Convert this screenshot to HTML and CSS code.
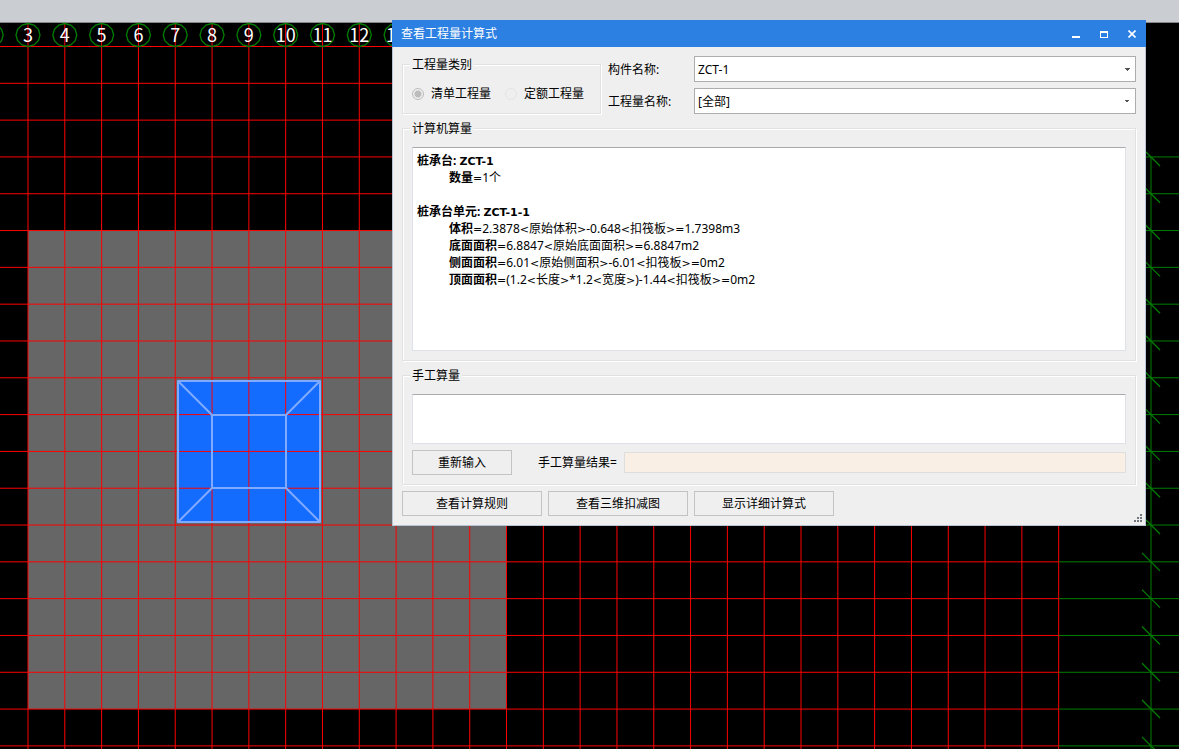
FILE: index.html
```html
<!DOCTYPE html>
<html lang="zh-CN">
<head>
<meta charset="utf-8">
<title>查看工程量计算式</title>
<link rel="stylesheet" href="styles.css">
</head>
<body>
<div class="toolbar"></div>
<main class="workspace">
  <svg class="drawing" aria-hidden="true">
    <rect class="slab" x="28" y="207" width="478" height="479"/>
    <rect class="cap-fill" x="178" y="358" width="142" height="141"/>
    <g id="axes"></g>
    <g class="cap-edges">
      <path d="M178 358H320V499H178ZM212 392H286V465H212Z"/>
      <path d="M178 358L212 392M320 358L286 392M178 499L212 465M320 499L286 465"/>
    </g>
    <g id="bubbles"></g>
  </svg>

  <section class="dialog" role="dialog" aria-labelledby="dialog-title">
    <header class="titlebar">
      <h1 class="title" id="dialog-title">查看工程量计算式</h1>
      <button class="win-btn" type="button" aria-label="最小化"><svg width="8" height="8"><path d="M0 6h8v2H0z" fill="#fff"/></svg></button>
      <button class="win-btn" type="button" aria-label="最大化"><svg width="8" height="8" shape-rendering="crispEdges"><path d="M0 1h8v7H0zM1 3v4h6V3z" fill="#fff" fill-rule="evenodd"/></svg></button>
      <button class="win-btn" type="button" aria-label="关闭"><svg width="8" height="8"><path d="M.5 .5l7 7M7.500 .5l-7 7" stroke="#fff" stroke-width="1.600"/></svg></button>
    </header>
    <form class="content">
      <div class="top-row">
        <fieldset class="group group-kind">
          <legend>工程量类别</legend>
          <div class="radios">
            <label class="radio-label"><input class="radio" type="radio" name="kind" checked disabled>清单工程量</label>
            <label class="radio-label"><input class="radio" type="radio" name="kind" disabled>定额工程量</label>
          </div>
        </fieldset>
        <div class="fields">
          <label for="component">构件名称:</label>
          <select class="select" id="component"><option>ZCT-1</option></select>
          <label for="quantity">工程量名称:</label>
          <select class="select" id="quantity"><option>[全部]</option></select>
        </div>
      </div>

      <fieldset class="group">
        <legend>计算机算量</legend>
        <div class="output">
          <p><b>桩承台: <span class="sym">ZCT-1</span></b></p>
          <p class="item"><b>数量</b><span class="sym">=</span>1个</p>
          <p class="second"><b>桩承台单元: <span class="sym">ZCT-1-1</span></b></p>
          <p class="item"><b>体积</b><span class="sym">=</span>2.3878<span class="sym">&lt;</span>原始体积<span class="sym">&gt;</span>-0.648<span class="sym">&lt;</span>扣筏板<span class="sym">&gt;=</span>1.7398m3</p>
          <p class="item"><b>底面面积</b><span class="sym">=</span>6.8847<span class="sym">&lt;</span>原始底面面积<span class="sym">&gt;=</span>6.8847m2</p>
          <p class="item"><b>侧面面积</b><span class="sym">=</span>6.01<span class="sym">&lt;</span>原始侧面积<span class="sym">&gt;</span>-6.01<span class="sym">&lt;</span>扣筏板<span class="sym">&gt;=</span>0m2</p>
          <p class="item"><b>顶面面积</b><span class="sym">=</span>(1.2<span class="sym">&lt;</span>长度<span class="sym">&gt;</span>*1.2<span class="sym">&lt;</span>宽度<span class="sym">&gt;</span>)-1.44<span class="sym">&lt;</span>扣筏板<span class="sym">&gt;=</span>0m2</p>
        </div>
      </fieldset>

      <fieldset class="group">
        <legend>手工算量</legend>
        <textarea class="manual" aria-label="手工算量"></textarea>
        <div class="result-row">
          <button class="btn btn-small" type="button">重新输入</button>
          <label class="result-label" for="result">手工算量结果=</label>
          <input class="result" id="result" type="text" readonly>
        </div>
      </fieldset>

      <div class="actions">
        <button class="btn" type="button">查看计算规则</button>
        <button class="btn" type="button">查看三维扣减图</button>
        <button class="btn" type="button">显示详细计算式</button>
      </div>
    </form>
    <svg class="grip" width="8" height="8" shape-rendering="crispEdges" aria-hidden="true"><path d="M6 0h2v2H6zM3 3h2v2H3zM6 3h2v2H6zM0 6h2v2H0zM3 6h2v2H3zM6 6h2v2H6z" fill="#71757c"/></svg>
  </section>
</main>
<script src="axes.js"></script>
</body>
</html>
```
FILE: styles.css
```css
* { box-sizing: border-box; }
body {
  margin: 0;
  height: 100vh;
  display: flex;
  flex-direction: column;
  overflow: hidden;
  background: #000;
  color: #000;
  font: 12px/17px "Noto Sans", "Noto Sans CJK SC", sans-serif;
}
.toolbar {
  height: 23px;
  flex: none;
  background: #cacdd1;
  border-bottom: 1px solid #85878a;
}
.workspace { position: relative; flex: 1; }
.drawing { position: absolute; inset: 0; width: 100%; height: 100%; overflow: visible; }
.slab { fill: #666; }
.cap-fill { fill: #146cff; }
.cap-edges { fill: none; stroke: #80aaff; stroke-width: 2; stroke-linejoin: round; }
.axis { stroke: #f00; }
.extension { stroke: #007f00; }
.tick { stroke: #007f00; stroke-width: 1.3; }
.bubble { fill: none; stroke: #007f00; stroke-width: 1.3; }
.number {
  fill: #fff;
  font: 18px "Noto Sans CJK SC", sans-serif;
  text-anchor: middle;
}

.dialog {
  position: absolute;
  top: -3px;
  left: 392px;
  right: 33px;
  background: #efefef;
  border: 1px solid #b9c3d3;
  border-top: 0;
}
.titlebar {
  display: flex;
  align-items: center;
  height: 27px;
  margin: 0 -1px;
  padding: 0 0 0 9px;
  background: #2c80e2;
  color: #fff;
}
.title { flex: 1; margin: 0; font-size: 12px; font-weight: 400; }
.win-btn {
  width: 28px;
  height: 27px;
  padding: 0;
  border: 0;
  background: none;
  display: grid;
  place-items: center;
}
.content { padding: 9px; display: flex; flex-direction: column; gap: 6px; }
.top-row { display: flex; gap: 7px; }
.group {
  min-width: 0;
  margin: 0;
  padding: 10px 9px 9px;
  border: 1px solid #e1e1e1;
  box-shadow: 1px 1px 0 #fff, inset 1px 1px 0 #fff;
}
.group-kind { width: 199px; padding-top: 12px; }
.group legend { padding: 0 2px; margin-left: -2px; line-height: 17px; background: #efefef; }
.radios { display: flex; gap: 14px; }
.radio-label { display: flex; align-items: center; gap: 7px; white-space: nowrap; }
.radio {
  appearance: none;
  width: 12px;
  height: 12px;
  margin: 0;
  border: 1px solid #e4e4e4;
  border-radius: 50%;
}
.radio:checked { border-color: #bcbcbc; background: radial-gradient(#bcbcbc 3px, transparent 4px); }
.fields {
  flex: 1;
  display: grid;
  grid-template-columns: 80px 1fr;
  gap: 6px;
  align-items: center;
}
.select {
  appearance: none;
  width: 100%;
  height: 26px;
  padding: 0 3px;
  border: 1px solid #adadad;
  border-radius: 0;
  color: #000;
  font: inherit;
  background: #fff conic-gradient(from -45deg at 50% 100%, #555 90deg, transparent 0) no-repeat right 5px center / 6px 3px;
}
.output, .manual {
  display: block;
  width: 100%;
  background: #fff;
  border: 1px solid #dfe1e8;
  border-top-color: #a9aaae;
}
.output { min-height: 204px; padding: 4px; }
.output p { margin: 0; }
.output .item { padding-left: 32px; }
.output .second { margin-top: 17px; }
.sym { font: 11px/1 "DejaVu Sans", sans-serif; font-weight: inherit; }
.manual { height: 50px; resize: none; font: inherit; }
.result-row { display: flex; align-items: center; margin-top: 6px; }
.btn {
  width: 140px;
  height: 25px;
  padding: 0;
  border: 1px solid #c3c3c3;
  background: #efefef;
  color: #000;
  font: inherit;
}
.btn-small { width: 100px; }
.result-label { width: 112px; padding-left: 26px; white-space: nowrap; }
.result {
  flex: 1;
  min-width: 0;
  height: 21px;
  border: 1px solid #dedede;
  background: #faefe5;
  font: inherit;
}
.actions { display: flex; gap: 6px; }
.grip { position: absolute; right: 3px; bottom: 3px; }
```
FILE: axes.js
```js
const NS = "http://www.w3.org/2000/svg";
const axes = document.getElementById("axes");
const bubbles = document.getElementById("bubbles");
const PITCH = 36.81;
const FIRST_X = 28;
const FIRST_Y = 23.5;
const LAST_X = FIRST_X + PITCH * 28;
const CHAIN_X = 1151;

function add(parent, tag, attrs, text) {
  const el = document.createElementNS(NS, tag);
  for (const key in attrs) el.setAttribute(key, attrs[key]);
  if (text) el.textContent = text;
  parent.appendChild(el);
}

function path(className, d) {
  add(axes, "path", { class: className, d });
}

for (let i = 0; i <= 28; i++) {
  path("axis", `M${FIRST_X + i * PITCH} 0V4000`);
}
for (let i = 0; i <= 60; i++) {
  const y = FIRST_Y + i * PITCH;
  path("axis", `M0 ${y}H${LAST_X}`);
  if (i >= 3) {
    path("extension", `M${LAST_X} ${y}H4000`);
    path("tick", `M${CHAIN_X - 9} ${y - 9}L${CHAIN_X + 9} ${y + 9}`);
  }
}
path("extension", `M${CHAIN_X} ${FIRST_Y + 3 * PITCH}V4000`);

for (let i = -1; i <= 10; i++) {
  const x = FIRST_X + i * PITCH;
  const points = [];
  for (let k = 0; k < 12; k++) {
    const a = k * Math.PI / 6;
    points.push(`${x + 12 * Math.sin(a)},${12 - 11.5 * Math.cos(a)}`);
  }
  add(bubbles, "polygon", { class: "bubble", points: points.join(" ") });
  if (i >= 0) add(bubbles, "text", { class: "number", x, y: 19 }, String(i + 3));
}
```
